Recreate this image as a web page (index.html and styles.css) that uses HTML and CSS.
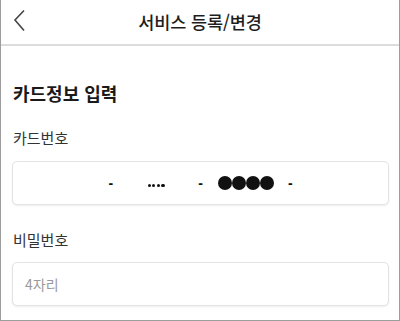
FILE: index.html
```html
<!DOCTYPE html>
<html lang="ko">
<head>
<meta charset="utf-8">
<title>서비스 등록/변경</title>
<link rel="stylesheet" href="styles.css">
</head>
<body>
<div class="page">
  <header class="header">
    <span class="back">
      <svg width="14" height="24" viewBox="0 0 14 24"><polyline points="11,1.5 2,11 11,21.5" fill="none" stroke="#444" stroke-width="1.6" stroke-linejoin="miter"/></svg>
    </span>
    <h1 class="title">서비스 등록/변경</h1>
  </header>
  <main class="content">
    <h2 class="section-title">카드정보 입력</h2>
    <div class="label label-card">카드번호</div>
    <div class="box card-box">
      <span class="seg"></span>
      <span class="dash">-</span>
      <span class="seg"><span class="dots"><i></i><i></i><i></i><i></i></span></span>
      <span class="dash">-</span>
      <span class="seg"><span class="circles"><i></i><i></i><i></i><i></i></span></span>
      <span class="dash">-</span>
      <span class="seg"></span>
    </div>
    <div class="label label-pw">비밀번호</div>
    <div class="box pw-box"><span class="placeholder">4자리</span></div>
  </main>
</div>
</body>
</html>
```
FILE: styles.css
```css
* { box-sizing: border-box; }
html, body { margin: 0; padding: 0; background: #fff; }
body {
  font-family: "Noto Sans CJK KR", "Noto Sans", sans-serif;
  color: #222;
}
.page {
  width: 400px;
  height: 321px;
  border-left: 1px solid #9c9c9c;
  border-right: 1px solid #9c9c9c;
  border-bottom: 1px solid #9c9c9c;
  overflow: hidden;
}
.header {
  position: relative;
  height: 46px;
  border-bottom: 2px solid #dcdcdc;
  display: flex;
  align-items: center;
  justify-content: center;
}
.back {
  position: absolute;
  left: 12px;
  top: 9px;
  width: 14px;
  height: 24px;
}
.back svg { display: block; }
.title {
  margin: 0;
  font-size: 17.5px;
  font-weight: 500;
  line-height: 24px;
  color: #1e1e1e;
  letter-spacing: -0.1px;
}
.content {
  padding: 35px 10px 0 11px;
}
.section-title {
  margin: 0 0 0 1px;
  font-size: 18px;
  font-weight: 700;
  line-height: 24px;
  color: #1a1a1a;
}
.label {
  margin-left: 1px;
  font-size: 15px;
  line-height: 20px;
  color: #333;
}
.label-card { margin-top: 23px; }
.label-pw { margin-top: 25px; }
.box {
  height: 44px;
  border: 1px solid #e3e3e3;
  border-radius: 5px;
  box-shadow: 0 1px 2px rgba(0,0,0,0.07);
  background: #fff;
}
.card-box {
  margin-top: 13px;
  display: flex;
  align-items: center;
  padding: 0 13px;
}
.seg {
  flex: 1;
  display: flex;
  justify-content: center;
  align-items: center;
}
.dash {
  width: 10px;
  text-align: center;
  font-family: "Liberation Sans", sans-serif;
  font-weight: 700;
  font-size: 14px;
  line-height: 16px;
  color: #111;
}
.dots {
  display: flex;
  gap: 1.4px;
  margin-top: 5px;
  margin-left: 1px;
}
.dots i {
  width: 3.2px;
  height: 3.2px;
  border-radius: 50%;
  background: #111;
}
.circles {
  display: flex;
  margin-left: 1px;
}
.circles i {
  width: 14px;
  height: 14px;
  border-radius: 50%;
  background: #111;
}
.pw-box {
  margin-top: 12px;
  display: flex;
  align-items: center;
  padding-left: 12px;
}
.placeholder {
  font-size: 14px;
  color: #9a9a9a;
}
```
